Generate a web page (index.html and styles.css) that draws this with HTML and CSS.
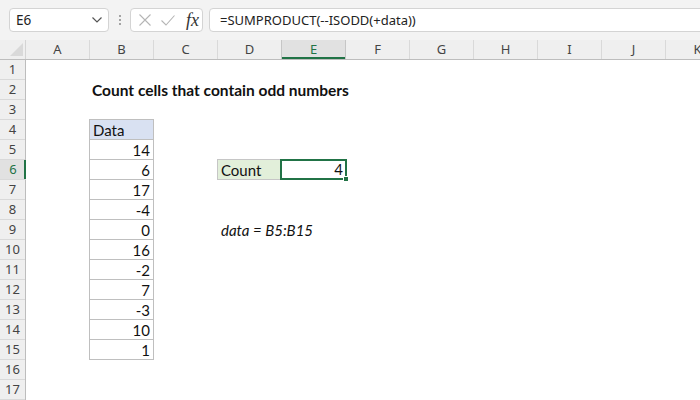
FILE: index.html
```html
<!DOCTYPE html>
<html lang="en">
<head>
<meta charset="UTF-8" />
<title>Count cells that contain odd numbers</title>
<link rel="stylesheet" href="styles.css">
</head>
<body>
  <div class="toolbar">
    <div class="namebox">
      <span>E6</span>
      <svg class="chevron" width="10" height="6" viewBox="0 0 10 6"><polyline points="0.5,0.5 5,5 9.5,0.5" /></svg>
    </div>
    <div class="grip"><i></i><i></i><i></i></div>
    <div class="fxbox">
      <svg class="cancel" width="12" height="12" viewBox="0 0 12 12"><path d="M0.5 0.5 L11.5 11.5 M11.5 0.5 L0.5 11.5" /></svg>
      <svg class="enter" width="14" height="11" viewBox="0 0 14 11"><polyline points="0.5,5.5 5,10 13.5,0.5" /></svg>
      <span class="fx">fx</span>
    </div>
    <div class="formula">=SUMPRODUCT(--ISODD(+data))</div>
  </div>

  <div class="sheet">
    <div class="colheads">
      <div class="corner"><span></span></div>
      <div class="ch">A</div>
      <div class="ch">B</div>
      <div class="ch">C</div>
      <div class="ch">D</div>
      <div class="ch active">E</div>
      <div class="ch">F</div>
      <div class="ch">G</div>
      <div class="ch">H</div>
      <div class="ch">I</div>
      <div class="ch">J</div>
      <div class="ch">K</div>
    </div>
    <div class="rowheads">
      <div class="rh">1</div>
      <div class="rh">2</div>
      <div class="rh">3</div>
      <div class="rh">4</div>
      <div class="rh">5</div>
      <div class="rh active">6</div>
      <div class="rh">7</div>
      <div class="rh">8</div>
      <div class="rh">9</div>
      <div class="rh">10</div>
      <div class="rh">11</div>
      <div class="rh">12</div>
      <div class="rh">13</div>
      <div class="rh">14</div>
      <div class="rh">15</div>
      <div class="rh">16</div>
      <div class="rh">17</div>
    </div>

    <div class="cell title">Count cells that contain odd numbers</div>

    <div class="datalist">
      <div class="cell head">Data</div>
      <div class="cell num">14</div>
      <div class="cell num">6</div>
      <div class="cell num">17</div>
      <div class="cell num">-4</div>
      <div class="cell num">0</div>
      <div class="cell num">16</div>
      <div class="cell num">-2</div>
      <div class="cell num">7</div>
      <div class="cell num">-3</div>
      <div class="cell num">10</div>
      <div class="cell num">1</div>
    </div>

    <div class="cell label">Count</div>
    <div class="cell num result">4<span class="handle"></span></div>

    <div class="cell note">data = B5:B15</div>
  </div>
</body>
</html>
```

FILE: styles.css
```css
/* Base */
*, *::before, *::after {
  box-sizing: border-box;
}
body {
  margin: 0;
  width: 700px;
  height: 400px;
  overflow: hidden;
  background: #fff;
  font-family: 'Noto Sans', 'Open Sans', sans-serif;
}

/* Formula bar */
.toolbar {
  height: 40px;
  background: #f3f3f3;
  display: flex;
  align-items: flex-start;
  padding: 8px 0 0 9px;
  white-space: nowrap;
}
.namebox,
.fxbox,
.formula {
  height: 24px;
  background: #fff;
  border: 1px solid #d4d4d4;
  border-radius: 4px;
  display: flex;
  align-items: center;
}
.namebox {
  width: 100px;
  padding: 0 6px 0 6px;
  justify-content: space-between;
  font-size: 13.5px;
  color: #222;
}
.chevron polyline {
  fill: none;
  stroke: #555;
  stroke-width: 1.2;
}
.grip {
  width: 21px;
  height: 24px;
  display: flex;
  flex-direction: column;
  align-items: center;
  justify-content: center;
  gap: 2px;
}
.grip i {
  width: 2px;
  height: 2px;
  background: #8a8a8a;
  border-radius: 50%;
}
.fxbox {
  width: 73px;
  padding-left: 8px;
  gap: 10px;
}
.cancel path,
.enter polyline {
  fill: none;
  stroke: #b5b5b5;
  stroke-width: 1.1;
}
.fx {
  margin-left: 1px;
  font-family: 'Liberation Serif', serif;
  font-style: italic;
  font-size: 18px;
  color: #333;
  line-height: 1;
}
.formula {
  margin-left: 6px;
  flex: 1 0 auto;
  margin-right: -20px;
  padding-left: 10px;
  font-size: 13px;
  color: #222;
}

/* Sheet grid */
.sheet {
  display: grid;
  grid-template-columns: 26px repeat(11, 64px);
  grid-template-rows: repeat(18, 20px);
  font-family: Lato, 'Open Sans', sans-serif;
  font-size: 15px;
  color: #111;
}
.colheads {
  grid-row: 1;
  grid-column: 1 / -1;
  display: flex;
  background: #efefef;
  border-bottom: 1px solid #bdbdbd;
}
.corner {
  width: 26px;
  flex: none;
  border-right: 1px solid #d4d4d4;
  position: relative;
}
.corner span {
  position: absolute;
  right: 2px;
  bottom: 3px;
  border-style: solid;
  border-width: 0 0 13px 13px;
  border-color: transparent transparent #d9d9d9 transparent;
}
.ch {
  width: 64px;
  flex: none;
  border-right: 1px solid #d9d9d9;
  text-align: center;
  font-family: 'Noto Sans', 'Open Sans', sans-serif;
  font-size: 13px;
  line-height: 19px;
  color: #444;
}
.ch.active {
  background: #e1e1e1;
  color: #217346;
  border-left: 1px solid #c6c6c6;
  border-right-color: #c6c6c6;
  margin-left: -1px;
  width: 65px;
  box-shadow: inset 0 -2px 0 #217346;
}
.rowheads {
  grid-row: 2 / -1;
  grid-column: 1;
  display: flex;
  flex-direction: column;
  background: #efefef;
  border-right: 1px solid #bdbdbd;
}
.rh {
  height: 20px;
  flex: none;
  border-bottom: 1px solid #d9d9d9;
  text-align: center;
  font-family: 'Noto Sans', 'Open Sans', sans-serif;
  font-size: 13px;
  line-height: 19px;
  color: #444;
}
.rh.active {
  background: #e1e1e1;
  color: #217346;
  box-shadow: inset -2px 0 0 #217346;
  margin-right: -1px;
}

/* Cells */
.cell {
  height: 20px;
  line-height: 20px;
  padding: 0 3px;
  white-space: nowrap;
}
.cell.num {
  text-align: right;
}
.title {
  grid-row: 3;
  grid-column: 3 / span 6;
  padding-left: 2px;
  font-size: 15.5px;
  font-weight: 700;
}
.datalist {
  grid-row: 5 / span 12;
  grid-column: 3;
  margin: -1px 0 0 -1px;
  border-top: 1px solid #bfbfbf;
  border-left: 1px solid #bfbfbf;
  display: flex;
  flex-direction: column;
}
.datalist .cell {
  border-right: 1px solid #bfbfbf;
  border-bottom: 1px solid #bfbfbf;
}
.datalist .head {
  background: #d9e1f2;
}
.label {
  grid-row: 7;
  grid-column: 5;
  margin: -1px 0 0 -1px;
  height: 21px;
  background: #e2efda;
  border: 1px solid #c6c6c6;
}
.result {
  grid-row: 7;
  grid-column: 6;
  margin: -1px -1px 0 -2px;
  height: 21px;
  line-height: 17px;
  border: 2px solid #217346;
  position: relative;
  padding-right: 2px;
}
.handle {
  position: absolute;
  right: -4px;
  bottom: -4px;
  width: 6px;
  height: 6px;
  background: #217346;
  border: 1px solid #fff;
}
.note {
  grid-row: 10;
  grid-column: 5 / span 3;
  font-style: italic;
}
```
